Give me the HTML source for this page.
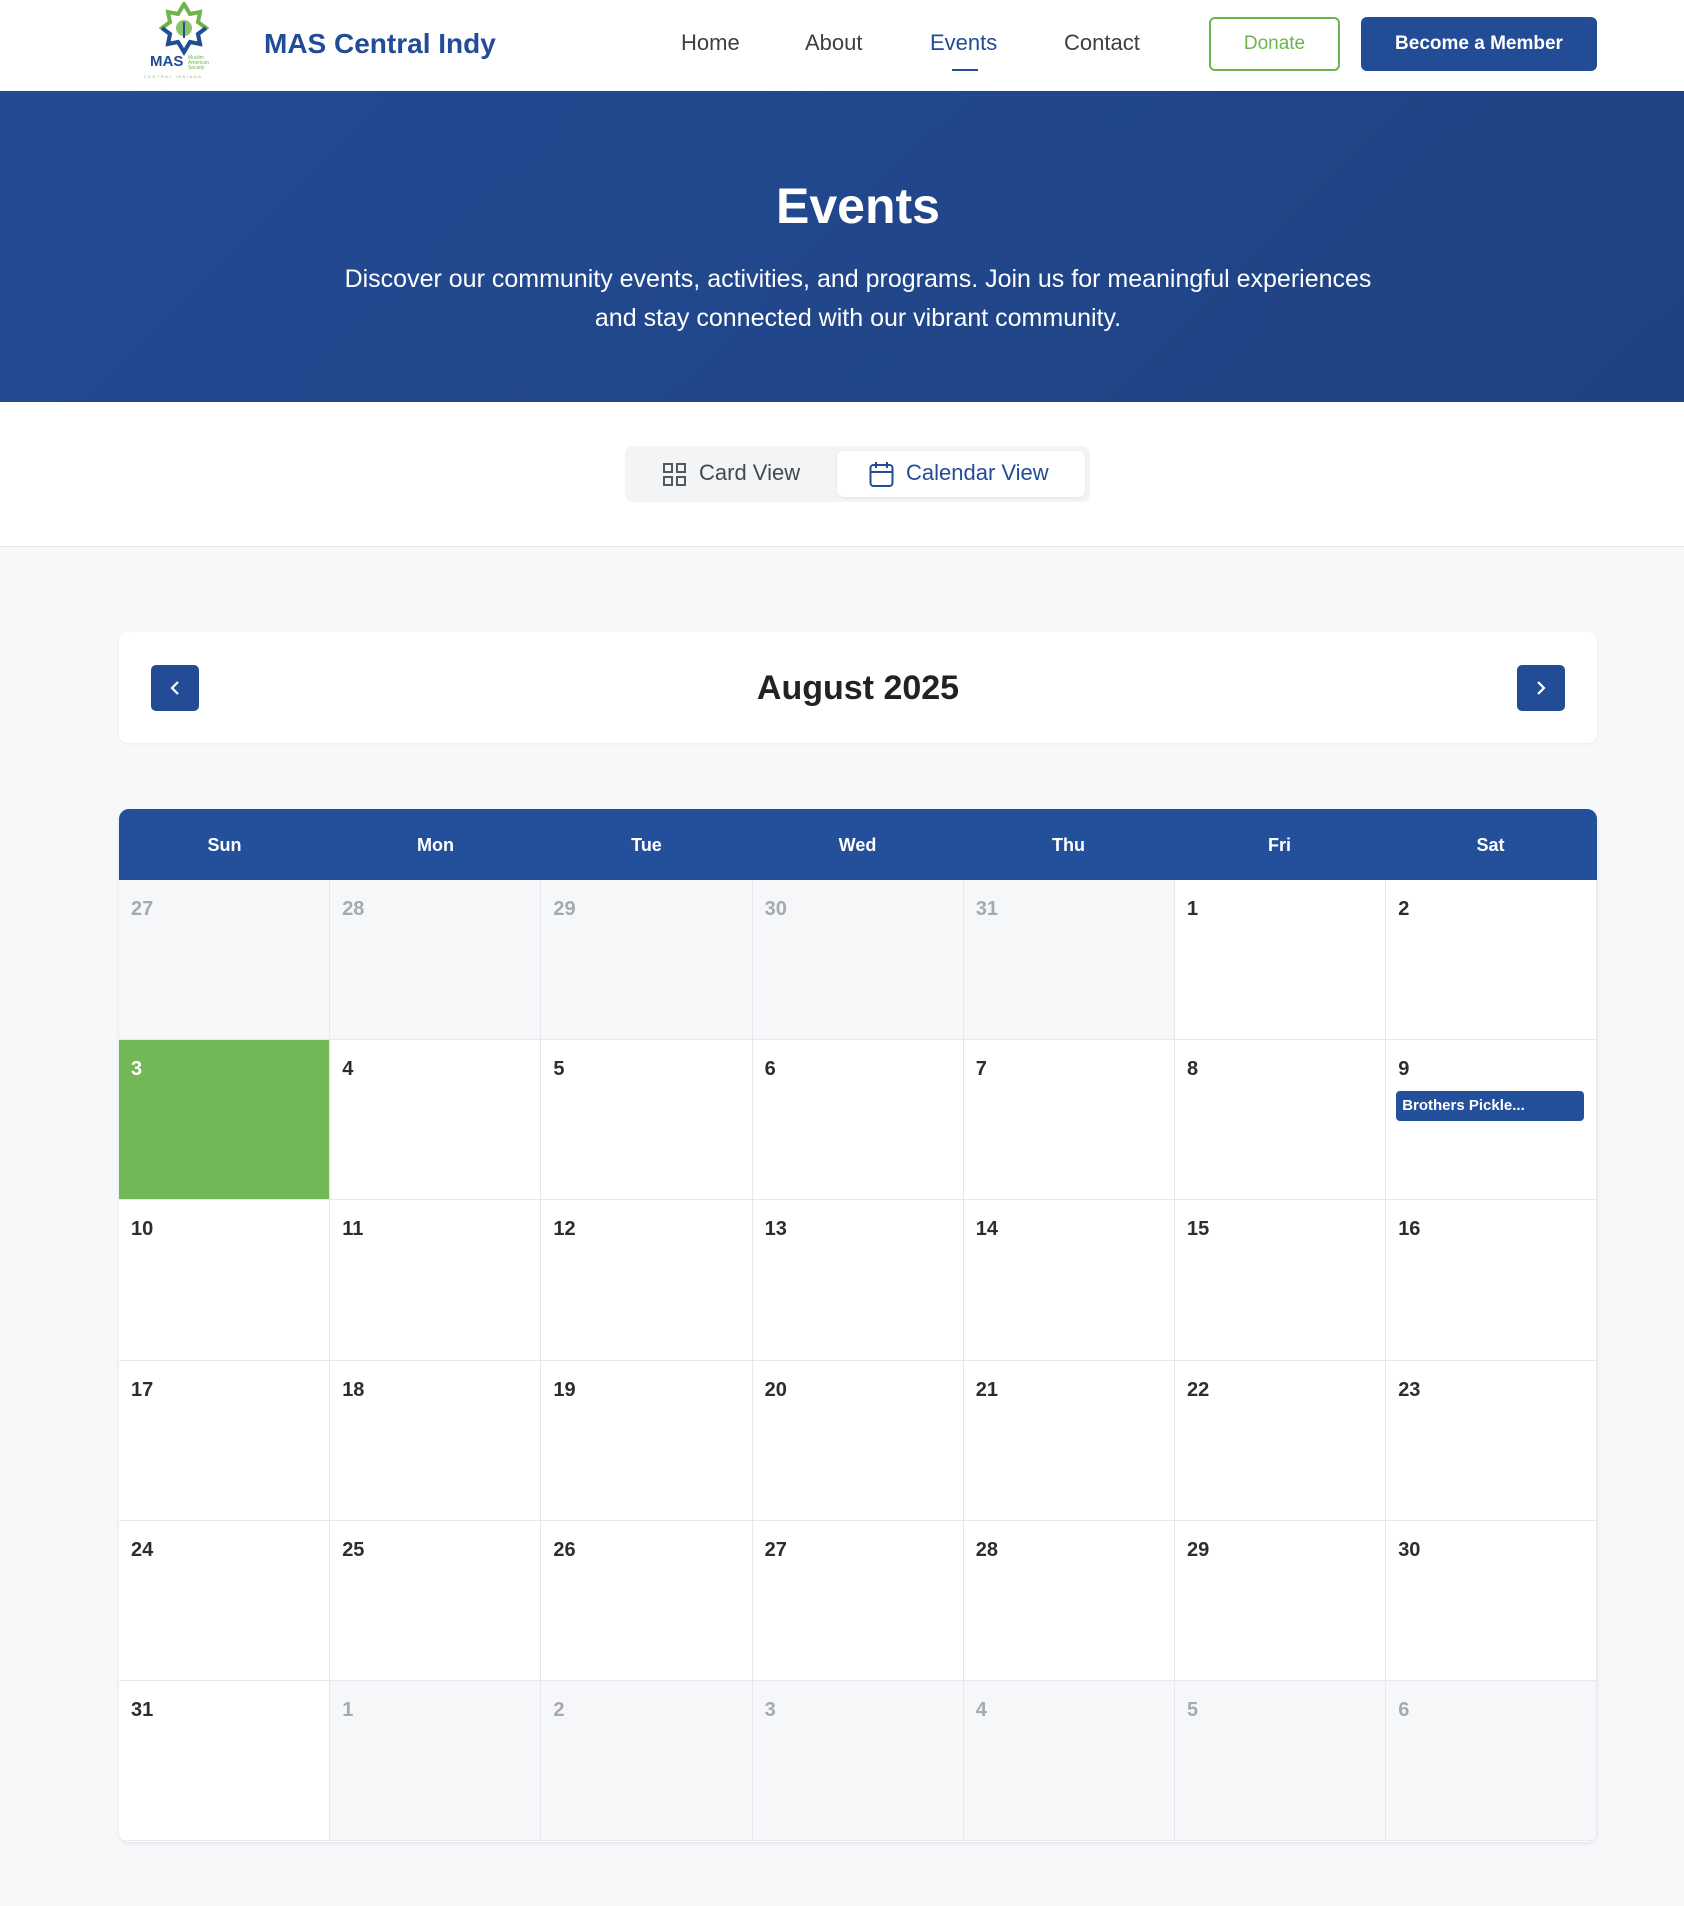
<!DOCTYPE html>
<html><head><meta charset="utf-8"><style>
*{box-sizing:border-box;margin:0;padding:0}
body{width:1684px;height:1906px;background:#f7f8fa;font-family:"Liberation Sans",sans-serif;color:#222;overflow:hidden;position:relative}
.hdr{position:absolute;top:0;left:0;width:1684px;height:91px;background:#fff}
.nav a{position:absolute;top:30px;font-size:22px;color:#3c3f45;text-decoration:none}
.btn{position:absolute;top:17px;height:54px;border-radius:6px;font-size:19px;font-weight:bold;display:flex;align-items:center;justify-content:center}
.hero{position:absolute;top:91px;left:0;width:1684px;height:311px;background:linear-gradient(135deg,#234b94,#1f4282);color:#fff;text-align:center}
.hero h1{position:absolute;top:86px;left:16px;width:100%;font-size:50px}
.hero p{position:absolute;top:169px;left:16px;width:100%;font-size:25px;line-height:39px}
.sec{position:absolute;top:402px;left:0;width:1684px;height:145px;background:#fff;border-bottom:1px solid #e6e8ec}
.tog{position:absolute;left:625px;top:44px;width:465px;height:56px;background:#f3f4f6;border-radius:8px}
.tog .a{position:absolute;left:212px;top:5px;width:248px;height:46px;background:#fff;border-radius:7px;box-shadow:0 1px 3px rgba(0,0,0,.08)}
.tl{position:absolute;top:14px;font-size:22px}
.mc{position:absolute;left:119px;top:632px;width:1478px;height:111px;background:#fff;border-radius:10px;box-shadow:0 1px 3px rgba(0,0,0,.05)}
.ab{position:absolute;top:33px;width:48px;height:46px;background:#234c97;border-radius:5px}
.cal{position:absolute;left:119px;top:809px;width:1478px;height:1033px;background:#fff;border-radius:10px;overflow:hidden;box-shadow:0 2px 4px rgba(0,0,0,.08)}
.ch{position:absolute;top:0;left:0;width:1478px;height:71px;background:#234f9b}
.ch div{position:absolute;top:26px;width:211px;text-align:center;color:#fff;font-weight:bold;font-size:18px}
.c{position:absolute;width:211.2px;height:160.2px;border-right:1.5px solid #e7e8ec;border-bottom:1.5px solid #e7e8ec;background:#fff;font-weight:bold;font-size:20px;padding:18px 0 0 12px;color:#2b2d31}
.c.o{background:#f6f7f9;color:#a6a9af}
.c.t{background:#72b856;color:#fff}
.ev{position:absolute;left:10px;top:51px;width:188px;height:30px;background:#234f9b;color:#fff;font-size:15px;border-radius:4px;padding:6px 0 0 6px}
</style></head><body>
<div class="hdr">
<svg style="position:absolute;left:142px;top:2px" width="86" height="78" viewBox="0 0 86 78">
<path d="M42 2 L48 12 L58 10 L56 20 L64 26 L56 32 L58 42 L48 40 L42 50 L36 40 L26 42 L28 32 L20 26 L28 20 L26 10 L36 12Z" fill="none" stroke="#6db54a" stroke-width="4"/>
<path d="M20 26 L28 32 L26 42 L36 40 L42 50 L48 40 L58 42 L56 32 L64 26" fill="none" stroke="#234c97" stroke-width="4"/>
<circle cx="42" cy="26" r="8" fill="#8cc26c"/><path d="M42 20v16" stroke="#234c97" stroke-width="2"/>
<text x="8" y="64" font-family="Liberation Sans" font-weight="bold" font-size="15" fill="#234c97">MAS</text>
<text x="46" y="57" font-size="5" fill="#6db54a" font-family="Liberation Sans">Muslim</text>
<text x="46" y="62" font-size="5" fill="#6db54a" font-family="Liberation Sans">American</text>
<text x="46" y="67" font-size="5" fill="#6db54a" font-family="Liberation Sans">Society</text>
<text x="2" y="76" font-size="4" letter-spacing="1.5" fill="#8cc26c" font-family="Liberation Sans">CENTRAL INDIANA</text>
</svg>
<div style="position:absolute;left:264px;top:28px;font-size:28px;font-weight:bold;color:#234c97">MAS Central Indy</div>
<div class="nav"><a style="left:681px">Home</a><a style="left:805px">About</a><a style="left:930px;color:#234c97">Events</a><a style="left:1064px">Contact</a></div>
<div style="position:absolute;left:952px;top:69px;width:26px;height:2px;background:#234c97"></div>
<div class="btn" style="left:1209px;width:131px;border:2px solid #6db54a;color:#6db54a;font-weight:normal">Donate</div>
<div class="btn" style="left:1361px;width:236px;background:#234c97;color:#fff">Become a Member</div>
</div>
<div class="hero"><h1>Events</h1><p>Discover our community events, activities, and programs. Join us for meaningful experiences<br>and stay connected with our vibrant community.</p></div>
<div class="sec"><div class="tog">
<svg style="position:absolute;left:38px;top:17px" width="23" height="23" viewBox="0 0 23 23" fill="none" stroke="#55585e" stroke-width="2"><rect x="1" y="1" width="8" height="8"/><rect x="14" y="1" width="8" height="8"/><rect x="1" y="14" width="8" height="8"/><rect x="14" y="14" width="8" height="8"/></svg>
<div class="tl" style="left:74px;color:#45484e">Card View</div>
<div class="a"></div>
<svg style="position:absolute;left:244px;top:15px" width="25" height="27" viewBox="0 0 25 27" fill="none" stroke="#234c97" stroke-width="2"><rect x="1.5" y="4" width="22" height="21" rx="3"/><path d="M1.5 11h22M7 1v6M18 1v6"/></svg>
<div class="tl" style="left:281px;color:#234c97">Calendar View</div>
</div></div>
<div class="mc">
<div class="ab" style="left:32px"><svg width="48" height="46" viewBox="0 0 48 46"><path d="M27 17l-6 6 6 6" fill="none" stroke="#fff" stroke-width="2.2"/></svg></div>
<div style="position:absolute;top:37px;width:100%;text-align:center;font-size:34px;font-weight:bold;color:#222">August 2025</div>
<div class="ab" style="left:1398px"><svg width="48" height="46" viewBox="0 0 48 46"><path d="M21 17l6 6-6 6" fill="none" stroke="#fff" stroke-width="2.2"/></svg></div>
</div>
<div class="cal">
<div class="ch"><div style="left:0">Sun</div><div style="left:211px">Mon</div><div style="left:422px">Tue</div><div style="left:633px">Wed</div><div style="left:844px">Thu</div><div style="left:1055px">Fri</div><div style="left:1266px">Sat</div></div>
<div id="g"></div>
</div>
<script>
var d=[[27,1],[28,1],[29,1],[30,1],[31,1],[1],[2]];
for(var i=3;i<=31;i++)d.push([i]);for(i=1;i<=6;i++)d.push([i,1]);
var h='';d.forEach(function(x,k){var r=Math.floor(k/7),c=k%7;var cls='c'+(x[1]?' o':'')+(k==7?' t':'');
h+='<div class="'+cls+'" style="left:'+(c*211.2)+'px;top:'+(71+r*160.2)+'px">'+x[0]+(k==13?'<div class="ev">Brothers Pickle...</div>':'')+'</div>';});
document.getElementById('g').innerHTML=h;
</script>
</body></html>
